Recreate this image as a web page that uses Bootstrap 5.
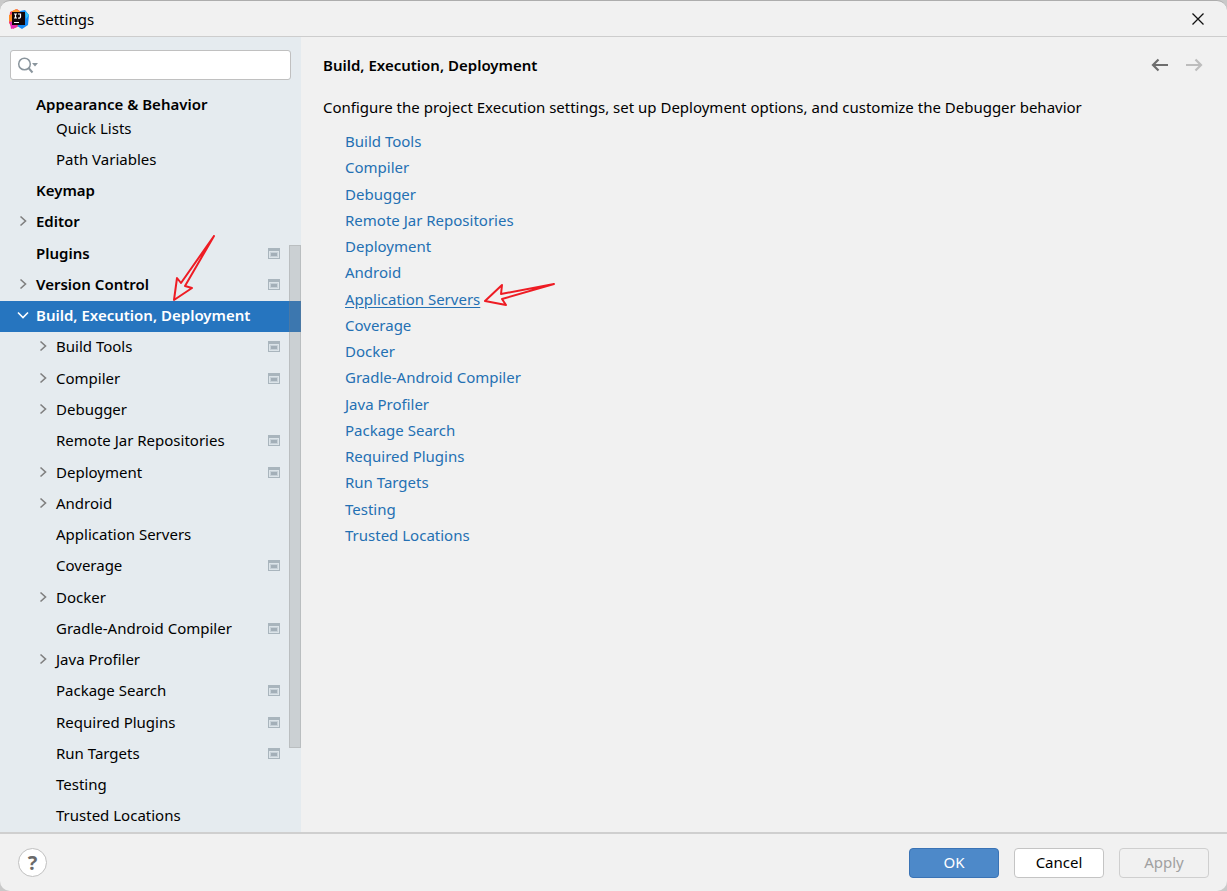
<!DOCTYPE html>
<html lang="en">
<head>
<meta charset="utf-8">
<meta name="viewport" content="width=device-width, initial-scale=1">
<title>Settings</title>
<link rel="stylesheet" href="https://cdn.jsdelivr.net/npm/bootstrap@5.3.0/dist/css/bootstrap.min.css">
<style>
  body { background: #c9c9c9; color: #000; font: 15px/20px "Noto Sans", "Open Sans", sans-serif; }
  .dialog { background: #f1f1f1; border-top: 1px solid #adadad; border-radius: 10px; overflow: hidden; }
  .titlebar { height: 36px; border-bottom: 1px solid #cdcdcd; padding: 0 22px 0 9px; }
  .side { width: 301px; background: #e5ebef; }
  .search { margin: 13px 10px 0; height: 30px; }
  .search input { height: 30px; padding: 0 8px 0 34px; border: 1px solid #c0c0c0; border-radius: 3px; font-size: 15px; }
  .search svg { left: 7px; top: 7px; }
  .group-head { padding: 14px 0 0 36px; height: 33px; font-weight: 600; }
  .tree-row { color: #000; padding: 0 21px 2px 36px; min-height: 24px; }
  .tree-row .chev { left: 18px; }
  .tree-row.sub { padding-left: 56px; }
  .tree-row.sub .chev { left: 38px; }
  .tree-row.top-level { font-weight: 600; }
  .tree-row.chosen { background: #2675bf; color: #fff; }
  .tree-row.chosen .chev { left: 17px; stroke: #fff; }
  .chev { fill: none; stroke: #7f7f7f; stroke-width: 1.6; }
  .thumb { right: 0; top: 208px; bottom: 84px; width: 12px; background: rgba(128,128,128,.25); border: 1px solid rgba(128,128,128,.22); z-index: 2; }
  .mark-arrow { fill: none; stroke: #ee1c24; stroke-width: 2; stroke-linejoin: round; z-index: 3; }
  .arrow-tree { left: 172px; bottom: 100%; }
  .arrow-link { left: 100%; top: 50%; margin: -17px 0 0 2px; }
  .content { padding: 18px 24px 0 22px; }
  .content h1 { font-size: 15px; line-height: 20px; font-weight: 600; }
  .history { gap: 18px; }
  .intro { margin: 22px 0 11px; }
  .topics { padding-left: 22px; min-height: 420px; }
  .topics a { color: #2470b3; text-decoration: none; }
  .topics a:hover, .topics a.hovered { text-decoration: underline; text-underline-offset: 2px; }
  .foot { border-top: 2px solid #cfcfcf; height: 59px; padding: 0 18px; }
  .foot .actions { gap: 15px; }
  .foot .btn { width: 90px; height: 30px; padding: 0; font-size: 15px; border-radius: 4px; border: 1px solid #c4c4c4; background: #fff; color: #000; }
  .foot .btn.ok { background: #4d89c9; border-color: #3a73b5; color: #fff; }
  .foot .btn:disabled { background: #f1f1f1; border-color: #cfcfcf; color: #a0a0a0; opacity: 1; }
  .foot .help { width: 29px; height: 29px; border-radius: 50%; border: 1px solid #c0c0c0; background: #fff; color: #6a6a6a; font-size: 20px; line-height: 20px; font-weight: 700; }
  .plain { border: 0; background: none; padding: 0; }
</style>
</head>
<body>
<svg class="d-none" aria-hidden="true">
  <symbol id="proj" viewBox="0 0 12 12"><path d="M0 1h12v11H0z" fill="#a9b5bd"/><path d="M1 4h10v7H1z" fill="#dce4e9"/><path d="M2 5h8v5H2z" fill="#c6d0d7"/><path d="M3 6h6v3H3z" fill="#a3afb8"/></symbol>
  <symbol id="right" viewBox="0 0 10 12"><path d="M2.500 1.500 7.500 6l-5 4.500"/></symbol>
  <symbol id="down" viewBox="0 0 12 12"><path d="M1 3.500 6 8.500l5-5"/></symbol>
</svg>
<div class="dialog d-flex flex-column min-vh-100">
  <header class="titlebar d-flex align-items-center flex-shrink-0">
    <svg width="20" height="20" viewBox="0 0 20 20" aria-hidden="true">
      <path d="M1 3 8 0l4 3-2 14-6 3-4-6z" fill="#f43b6c"/><path d="M0 6l4-1v9l-4-2z" fill="#ff8a24"/><path d="M1 13l3-1 4 6-6 2z" fill="#e62bb6"/><path d="M7 0l5 3-5 2-5-2z" fill="#ff9828"/><path d="M11 2l5-1 4 5-1 10-6 4-5-3 6-4z" fill="#1588f5"/><path d="M16 2l4 4-3 4z" fill="#35c3f5"/>
      <path d="M3 3h13v13H3z" fill="#120508"/><path d="M5 5h3M6.500 5v4M5 9h3M9 5h2.500v3q0 1.200-2.500 1" fill="none" stroke="#fff" stroke-width="1.200"/><path d="M5 13h5v1H5z" fill="#fff"/>
    </svg>
    <span class="ms-2">Settings</span>
    <button class="plain ms-auto d-flex" type="button" aria-label="Close"><svg width="14" height="14" viewBox="0 0 14 14"><path d="M1.500 1.500l11 11m0-11l-11 11" stroke="#111" stroke-width="1.300"/></svg></button>
  </header>

  <div class="d-flex flex-grow-1">
    <aside class="side position-relative d-flex flex-column flex-shrink-0">
      <div class="search position-relative">
        <input class="form-control" type="text" aria-label="Search settings">
        <svg class="position-absolute" width="22" height="17" viewBox="0 0 22 17" fill="none" stroke="#8a959d" stroke-width="1.500"><circle cx="7.500" cy="7" r="5.800"/><path d="M11.500 11l4 4.500" stroke-width="2"/><path d="M15 6h6l-3 3.500z" fill="#8a959d" stroke="none"/></svg>
      </div>
      <div class="group-head">Appearance &amp; Behavior</div>
      <nav class="tree d-flex flex-column flex-grow-1" id="tree" aria-label="Settings categories"></nav>
      <div class="thumb position-absolute"></div>
    </aside>

    <main class="content flex-grow-1">
      <div class="d-flex align-items-center">
        <h1 class="m-0">Build, Execution, Deployment</h1>
        <div class="history d-flex ms-auto">
          <button class="plain d-flex" type="button" aria-label="Back"><svg width="17" height="14" viewBox="0 0 17 14" fill="none" stroke="#6e6e6e" stroke-width="2.200"><path d="M17 7H2M7.500 1.500 2 7l5.500 5.500"/></svg></button>
          <button class="plain d-flex" type="button" aria-label="Forward" disabled><svg width="17" height="14" viewBox="0 0 17 14" fill="none" stroke="#bdbdbd" stroke-width="2.200"><path d="M0 7h15M9.500 1.500 15 7l-5.500 5.500"/></svg></button>
        </div>
      </div>
      <p class="intro">Configure the project Execution settings, set up Deployment options, and customize the Debugger behavior</p>
      <ul class="topics list-unstyled d-flex flex-column m-0" id="topics"></ul>
    </main>
  </div>

  <footer class="foot d-flex align-items-center flex-shrink-0">
    <button class="help p-0" type="button" aria-label="Help">?</button>
    <div class="actions d-flex ms-auto">
      <button class="btn ok" type="button">OK</button>
      <button class="btn" type="button">Cancel</button>
      <button class="btn" type="button" disabled>Apply</button>
    </div>
  </footer>
</div>
<script src="https://cdn.jsdelivr.net/npm/bootstrap@5.3.0/dist/js/bootstrap.bundle.min.js"></script>
<script>
  // label, nesting level, arrow (r = collapsed, d = expanded), project-level marker
  const rows = [
    ['Quick Lists', 1], ['Path Variables', 1], ['Keymap', 0], ['Editor', 0, 'r'], ['Plugins', 0, '', 1],
    ['Version Control', 0, 'r', 1], ['Build, Execution, Deployment', 0, 'd'], ['Build Tools', 1, 'r', 1],
    ['Compiler', 1, 'r', 1], ['Debugger', 1, 'r'], ['Remote Jar Repositories', 1, '', 1], ['Deployment', 1, 'r', 1],
    ['Android', 1, 'r'], ['Application Servers', 1], ['Coverage', 1, '', 1], ['Docker', 1, 'r'],
    ['Gradle-Android Compiler', 1, '', 1], ['Java Profiler', 1, 'r'], ['Package Search', 1, '', 1],
    ['Required Plugins', 1, '', 1], ['Run Targets', 1, '', 1], ['Testing', 1], ['Trusted Locations', 1]
  ];
  const treeArrow = '<svg class="mark-arrow arrow-tree position-absolute" width="44" height="66" viewBox="0 0 44 66"><path d="M42 1 9 48 5 43 2 65l18-12-7-2z"/></svg>';
  const linkArrow = '<svg class="mark-arrow arrow-link position-absolute" width="74" height="26" viewBox="0 0 74 26"><path d="M72 2 19 12l1-9L3 19l21 4-4-6z"/></svg>';
  document.getElementById('tree').innerHTML = rows.map(([label, level, arrow, proj]) =>
    `<a href="#" class="tree-row position-relative d-flex align-items-center flex-fill text-decoration-none ${level ? 'sub' : 'top-level'}${arrow === 'd' ? ' chosen' : ''}">` +
    (arrow === 'r' ? '<svg class="chev position-absolute" width="10" height="12"><use href="#right"/></svg>' : '') +
    (arrow === 'd' ? '<svg class="chev position-absolute" width="12" height="12"><use href="#down"/></svg>' + treeArrow : '') +
    `<span>${label}</span>` + (proj ? '<svg class="ms-auto" width="12" height="12"><use href="#proj"/></svg>' : '') + '</a>').join('');
  document.getElementById('topics').innerHTML = rows.slice(7).map(([label]) =>
    `<li class="flex-fill d-flex align-items-center"><span class="position-relative"><a href="#"${label === 'Application Servers' ? ' class="hovered"' : ''}>${label}</a>` +
    (label === 'Application Servers' ? linkArrow : '') + '</span></li>').join('');
</script>
</body>
</html>
